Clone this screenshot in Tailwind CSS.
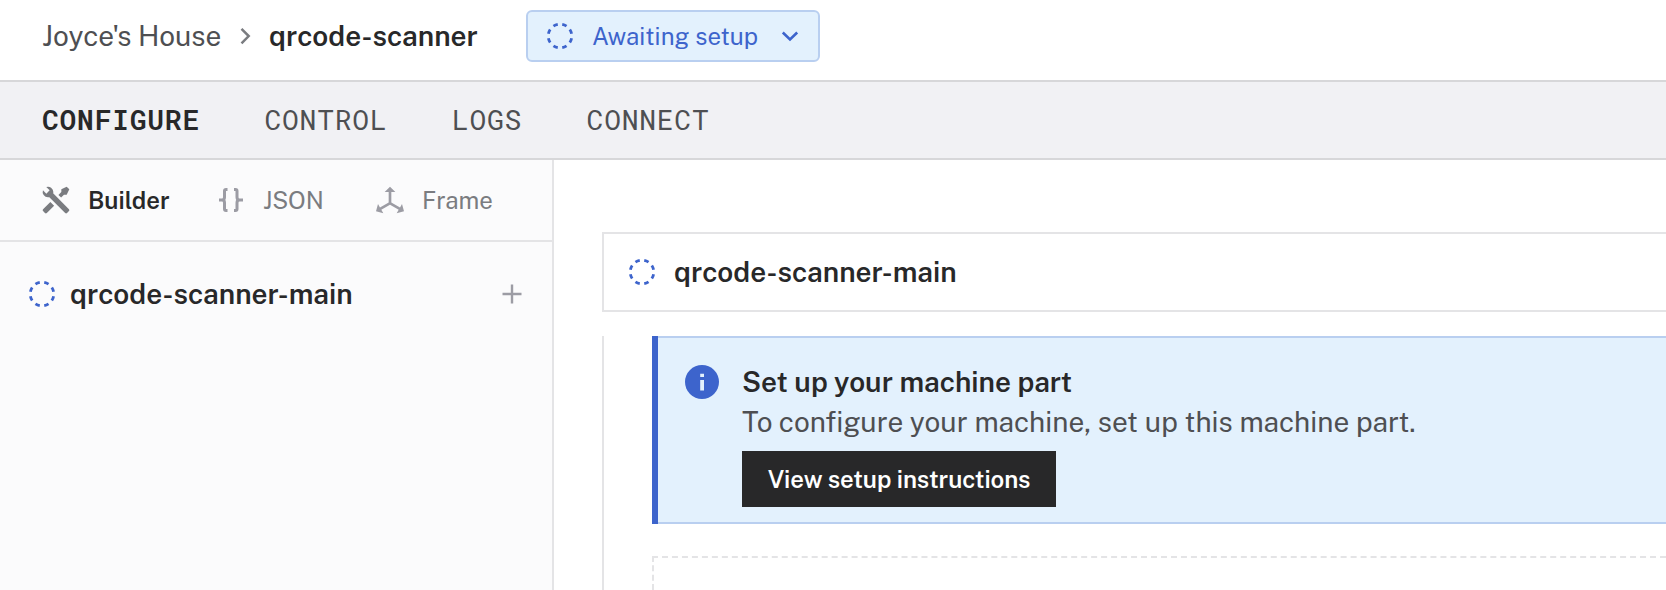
<!DOCTYPE html>
<html lang="en">
<head>
<meta charset="utf-8">
<title>qrcode-scanner</title>
<script src="https://cdn.jsdelivr.net/npm/@tailwindcss/browser@4"></script>
</head>
<body class="h-[590px] overflow-hidden bg-white font-['Public_Sans','Libre_Franklin','Inter',sans-serif] text-[28px] leading-10 text-[#282829]">
<svg class="hidden">
  <symbol id="pending" viewBox="0 0 32 32"><circle cx="16" cy="16" r="11.8" fill="none" stroke="#3d64cc" stroke-width="2.8" pathLength="32" stroke-dasharray="2 2" stroke-dashoffset="-1"/></symbol>
</svg>
<div class="flex h-[590px] flex-col">
  <header class="flex h-[82px] shrink-0 items-start border-b-2 border-[#d7d7d9] pl-[42px] pt-[10px]">
    <div class="flex h-[52px] items-center">
      <a class="w-[180px] whitespace-nowrap text-[#4e4f52]">Joyce's House</a>
      <svg class="ml-[13px] size-5" viewBox="0 0 20 20" fill="none" stroke="#7a7c80" stroke-width="2.5"><path d="M6.5 2.9 13.7 10.1 6.5 17.3"/></svg>
      <h1 class="ml-[14px] w-[257px] whitespace-nowrap font-semibold">qrcode-scanner</h1>
      <button class="flex h-[52px] w-[294px] items-center rounded-md border-2 border-[#b9cff0] bg-[#e3f1fd] pl-4 text-2xl text-[#3d64cc]">
        <svg class="size-8"><use href="#pending"/></svg>
        <span class="ml-4 w-[166px] whitespace-nowrap text-left">Awaiting setup</span>
        <svg class="ml-4 size-8" viewBox="0 0 32 32" fill="none" stroke="currentColor" stroke-width="2.6"><path d="M8.8 12.5 16 19.5 23.2 12.5"/></svg>
      </button>
    </div>
  </header>
  <nav class="flex h-[78px] shrink-0 items-center gap-[64.5px] border-b-2 border-[#d7d7d9] bg-[#f1f1f4] pl-[42px] font-['Roboto_Mono','DejaVu_Sans_Mono',monospace] tracking-[0.75px] text-[#4e4f52]">
    <a class="font-semibold text-[#282829]">CONFIGURE</a><a>CONTROL</a><a>LOGS</a><a>CONNECT</a>
  </nav>
  <div class="flex min-h-0 flex-1">
    <aside class="w-[554px] shrink-0 border-r-2 border-[#e4e4e6] bg-[#fbfbfc]">
      <div class="flex h-[82px] items-center border-b-2 border-[#e4e4e6] pl-10 text-2xl text-[#7a7c80]">
        <div class="flex w-[175px] items-center gap-4 font-semibold text-[#282829]">
          <svg class="size-8" viewBox="0 0 24 24" fill="#7a7c80"><path d="M21.71 20.29 20.29 21.71A1 1 0 0 1 18.88 21.71L7 9.85A3.81 3.81 0 0 1 6 10 4 4 0 0 1 2.22 4.7L4.76 7.24 5.29 6.71 6.71 5.29 7.24 4.76 4.7 2.22A4 4 0 0 1 10 6 3.81 3.81 0 0 1 9.85 7L21.71 18.88A1 1 0 0 1 21.71 20.29M2.29 18.88A1 1 0 0 0 2.29 20.29L3.71 21.71A1 1 0 0 0 5.12 21.71L10.59 16.25 7.76 13.42M20 2 16 4V6L13.83 8.17 15.83 10.17 18 8H20L22 4Z"/></svg>
          <span>Builder</span>
        </div>
        <div class="flex w-[159px] items-center gap-4">
          <svg class="size-8" viewBox="0 0 32 32" fill="none" stroke="#9c9ca4" stroke-width="3"><path d="M12.5 5.5H11Q9.5 5.5 9.5 7V13.3Q9.5 16 7 16H4 7Q9.5 16 9.5 18.7V25Q9.5 26.5 11 26.5H12.5M19 5.5H20.5Q22 5.5 22 7V13.3Q22 16 24.5 16H28 24.5Q22 16 22 18.7V25Q22 26.5 20.5 26.5H19"/></svg>
          <span>JSON</span>
        </div>
        <div class="flex items-center gap-4">
          <svg class="size-8" viewBox="0 0 24 24" fill="#9c9ca4"><path d="M12 2 16 6H13V13.85L19.53 17.61 21 15.03 22.5 20.5 17 21.96 18.53 19.35 12 15.58 5.47 19.35 7 21.96 1.5 20.5 3 15.03 4.47 17.61 11 13.85V6H8Z"/></svg>
          <span>Frame</span>
        </div>
      </div>
      <div class="flex h-[104px] items-center pl-[26px] pr-6">
        <svg class="size-8"><use href="#pending"/></svg>
        <span class="ml-3 flex-1 font-semibold">qrcode-scanner-main</span>
        <svg class="size-8" viewBox="0 0 32 32" fill="none" stroke="#9c9ca4" stroke-width="2.4"><path d="M16 6.5V25.5M6.5 16H25.5"/></svg>
      </div>
    </aside>
    <main class="flex min-w-0 flex-1 flex-col pl-12 pt-[72px]">
      <div class="flex h-20 shrink-0 items-center border-y-2 border-l-2 border-[#e4e4e6] pl-[22px]">
        <svg class="size-8"><use href="#pending"/></svg>
        <span class="ml-4 font-semibold">qrcode-scanner-main</span>
      </div>
      <div class="mt-6 flex min-h-0 flex-1 flex-col border-l-2 border-[#e4e4e6] pl-12">
        <section class="flex h-[188px] shrink-0 items-start border-y-2 border-y-[#b9cff0] bg-[#e3f1fd]">
          <div class="-my-0.5 h-[188px] w-1.5 bg-[#3d64cc]"></div>
          <svg class="ml-6 mt-6 size-10" viewBox="0 0 40 40"><circle cx="20" cy="20" r="17" fill="#3d64cc"/><path d="M18.2 11.8h3.8v3.2h-3.8zM18.2 18h3.8v10.5h-3.8z" fill="#e3f1fd"/></svg>
          <div class="ml-5 pt-6">
            <h2 class="whitespace-nowrap font-semibold">Set up your machine part</h2>
            <p class="whitespace-nowrap text-[#4e4f52]">To configure your machine, set up this machine part.</p>
            <button class="mt-[9px] flex h-14 w-[314px] items-center justify-center whitespace-nowrap bg-[#282829] text-2xl font-semibold tracking-[-0.08px] text-white">View setup instructions</button>
          </div>
        </section>
        <div class="mt-8 min-h-0 flex-1 border-l-2 border-t-2 border-dashed border-[#e4e4e6]"></div>
      </div>
    </main>
  </div>
</div>
</body>
</html>
